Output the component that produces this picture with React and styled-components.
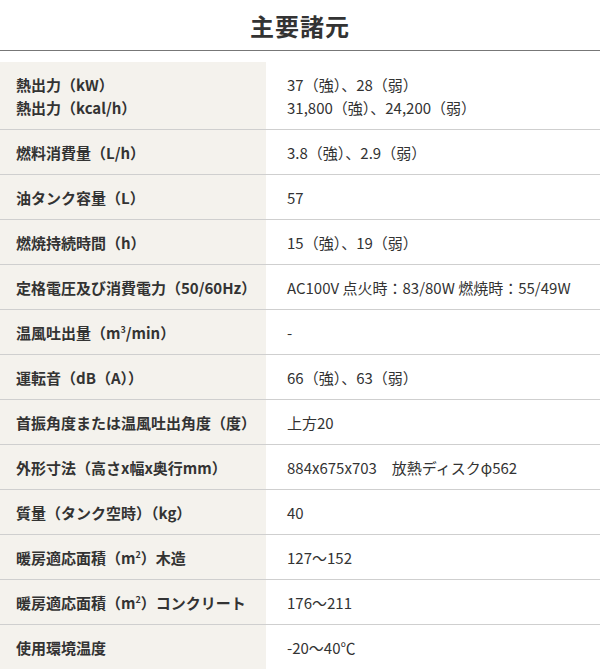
import React from "react";
import styled, { createGlobalStyle } from "styled-components";

const GlobalStyle = createGlobalStyle`
  body {
    margin: 0;
    background: #fff;
    font-family: "Noto Sans CJK JP", "Noto Sans", sans-serif;
    color: #333;
  }
`;

// 上付き文字（m² / m³）
const Sup = styled.sup`
  font-size: 9px;
  line-height: 0;
  vertical-align: 6px;
`;

// 仕様データ
const specs = [
  {
    label: ["熱出力（kW）", "熱出力（kcal/h）"],
    value: ["37（強）、28（弱）", "31,800（強）、24,200（弱）"],
  },
  { label: ["燃料消費量（L/h）"], value: ["3.8（強）、2.9（弱）"] },
  { label: ["油タンク容量（L）"], value: ["57"] },
  { label: ["燃焼持続時間（h）"], value: ["15（強）、19（弱）"] },
  {
    label: ["定格電圧及び消費電力（50/60Hz）"],
    value: ["AC100V 点火時：83/80W 燃焼時：55/49W"],
  },
  {
    label: [
      <>
        温風吐出量（m<Sup>3</Sup>/min）
      </>,
    ],
    value: ["-"],
  },
  { label: ["運転音（dB（A））"], value: ["66（強）、63（弱）"] },
  { label: ["首振角度または温風吐出角度（度）"], value: ["上方20"] },
  { label: ["外形寸法（高さx幅x奥行mm）"], value: ["884x675x703　放熱ディスクφ562"] },
  { label: ["質量（タンク空時）（kg）"], value: ["40"] },
  {
    label: [
      <>
        暖房適応面積（m<Sup>2</Sup>）木造
      </>,
    ],
    value: ["127〜152"],
  },
  {
    label: [
      <>
        暖房適応面積（m<Sup>2</Sup>）コンクリート
      </>,
    ],
    value: ["176〜211"],
  },
  { label: ["使用環境温度"], value: ["-20〜40℃"] },
];

export default function App() {
  return (
    <>
      <GlobalStyle />
      <SpecSection>
        <SpecTitleH2>主要諸元</SpecTitleH2>
        <SpecTable>
          {specs.map((row, i) => (
            <SpecRow key={i}>
              <LabelCell>
                {row.label.map((t, j) => (
                  <Line key={j}>{t}</Line>
                ))}
              </LabelCell>
              <ValueCell>
                {row.value.map((t, j) => (
                  <Line key={j}>{t}</Line>
                ))}
              </ValueCell>
            </SpecRow>
          ))}
        </SpecTable>
      </SpecSection>
    </>
  );
}

const SpecSection = styled.section`
  width: 600px;
`;

const SpecTitleH2 = styled.h2`
  margin: 0 0 11px 0;
  height: 50px;
  display: flex;
  align-items: center;
  justify-content: center;
  font-size: 24px;
  font-weight: 700;
  color: #333;
  border-bottom: 1px solid #777;
  letter-spacing: 1px;
`;

const SpecTable = styled.div`
  display: flex;
  flex-direction: column;
`;

const SpecRow = styled.div`
  display: grid;
  grid-template-columns: 266px 1fr;
  border-bottom: 1px solid #cfcfcf;
  &:last-child {
    border-bottom: none;
  }
`;

const LabelCell = styled.div`
  background: #f4f2ed;
  padding: 11px 16px 10px 16px;
  font-size: 15px;
  font-weight: 700;
  color: #333;
`;

const ValueCell = styled.div`
  padding: 11px 20px 10px 21px;
  font-size: 15px;
  color: #333;
`;

const Line = styled.div`
  line-height: 23px;
  white-space: nowrap;
`;
